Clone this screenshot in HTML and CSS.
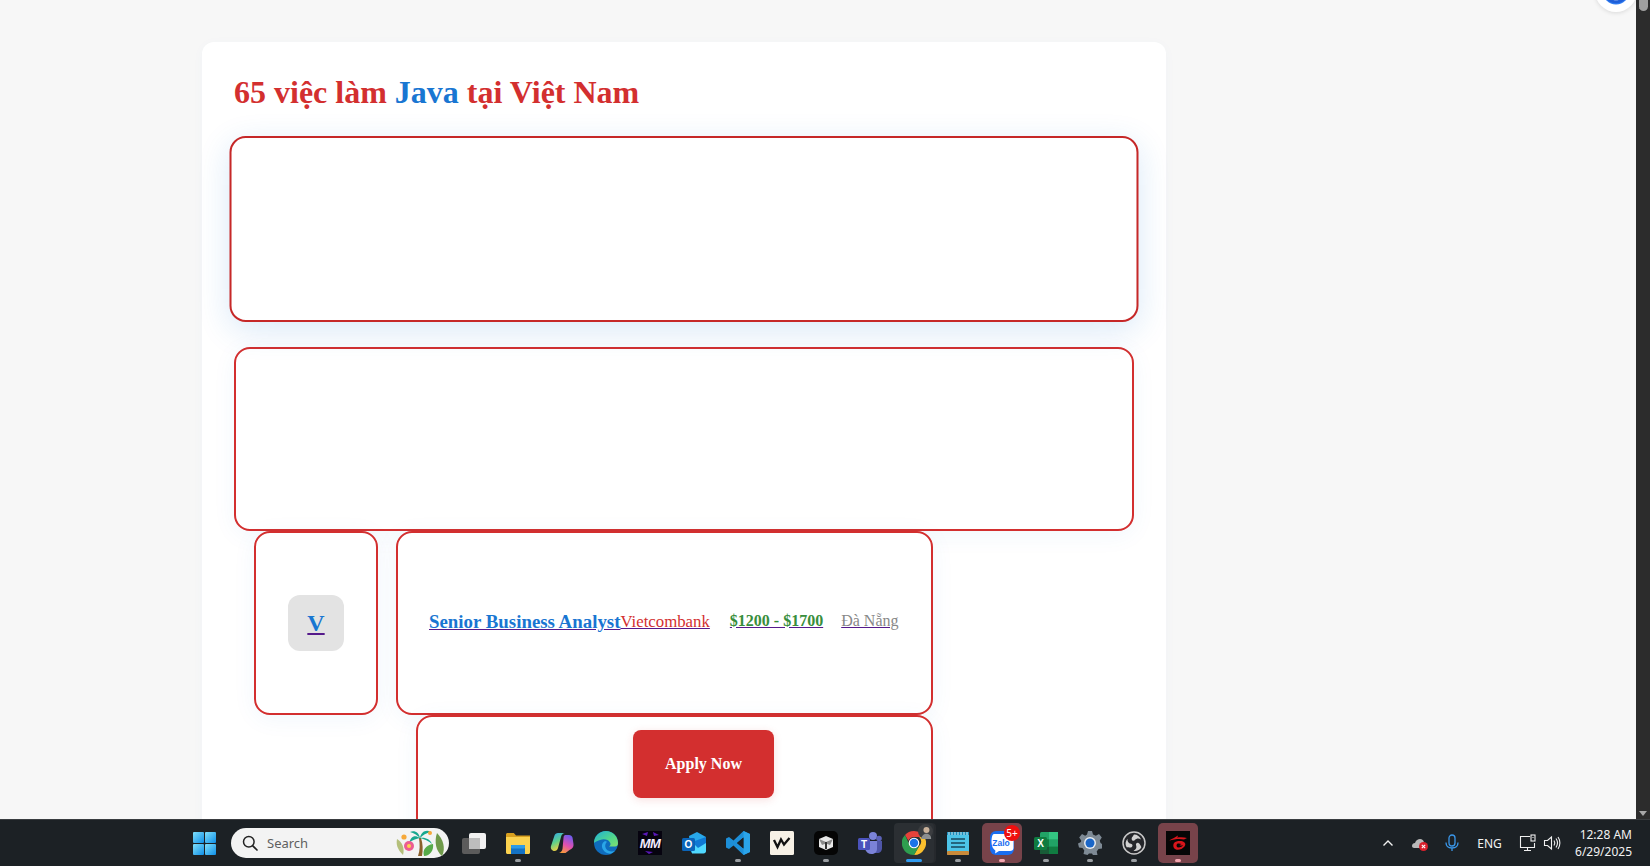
FILE: index.html
```html
<!DOCTYPE html>
<html lang="vi">
<head>
<meta charset="utf-8">
<title>65 việc làm Java tại Việt Nam</title>
<link rel="stylesheet" href="styles.css">
</head>
<body>
<div class="screen">
  <div class="viewport">
    <main class="page">
      <section class="panel">
        <h1 class="heading">65 việc làm <span class="heading-accent">Java</span> tại Việt Nam</h1>
        <div class="card card-hover"></div>
        <div class="card card-second"></div>
        <div class="job-grid">
          <div class="cell cell-logo">
            <a class="logo-box" href="#">V</a>
          </div>
          <div class="cell cell-info">
            <a class="job-title" href="#">Senior Business Analyst</a>
            <a class="job-company" href="#">Vietcombank</a>
            <a class="job-salary" href="#">$1200 - $1700</a>
            <a class="job-location" href="#">Đà Nẵng</a>
          </div>
          <div class="cell cell-action">
            <a class="apply" href="#">Apply Now</a>
          </div>
        </div>
      </section>
    </main>
    <div class="float-badge">
      <svg class="float-icon" viewBox="0 0 24 24"><circle cx="12" cy="12" r="11.500" fill="#2f7bf0"/><path d="M1 12c3 7 18 8 22 0-2 14-20 14-22 0z" fill="#1f5fd8"/><path d="M4 15c4 4.500 12 4.500 16 0-3 2-13 2-16 0z" fill="#fff"/><path d="M7 18.500c3 2 7 2 10 0-3 1-7 1-10 0z" fill="#fff"/></svg>
    </div>
    <div class="scrollbar">
      <svg class="sb-arrow" viewBox="0 0 10 10"><path d="M1 2h8L5 7z" fill="#9a9a9a" transform="rotate(180 5 5)"/></svg>
      <div class="sb-thumb"></div>
      <svg class="sb-arrow" viewBox="0 0 10 10"><path d="M1 3h8L5 8z" fill="#a8a8a8"/></svg>
    </div>
  </div>

  <footer class="taskbar">
    <div class="tb-item">
      <svg class="ic-start" viewBox="0 0 23 23">
        <defs><linearGradient id="win" x1="0" y1="0" x2="1" y2="1"><stop offset="0" stop-color="#7fe0fb"/><stop offset="1" stop-color="#0f8fe8"/></linearGradient></defs>
        <rect width="11" height="11" rx="1" fill="url(#win)"/><rect x="12" width="11" height="11" rx="1" fill="url(#win)"/><rect y="12" width="11" height="11" rx="1" fill="url(#win)"/><rect x="12" y="12" width="11" height="11" rx="1" fill="url(#win)"/>
      </svg>
    </div>
    <div class="search">
      <svg class="search-icon" viewBox="0 0 16 16"><circle cx="6.800" cy="6.800" r="5.300" fill="none" stroke="#222" stroke-width="1.500"/><path d="M10.800 10.800L15 15" stroke="#222" stroke-width="1.700" stroke-linecap="round"/></svg>
      <span class="search-label">Search</span>
      <svg class="search-art" viewBox="0 0 50 30">
        <path d="M7 27C1 21 0 16 1 11c5 3 8 9 6 16z" fill="#b4bf7a"/>
        <path d="M46 28c-6-5-8-14-5-23 6 6 9 15 5 23z" fill="#6f9a4a"/>
        <path d="M23 10c1 7 1 12-1 18h4c1-6 1-12-1-18z" fill="#8a5f2a"/>
        <path d="M24 10C18 6 15 9 13 15c3-3 7-4 11-5zM24 10c-1-5-5-8-10-6 4 1 7 3 10 6zM24 10c1-6 6-9 11-6-5 1-8 3-11 6zM24 10c5-1 10 1 12 6-3-3-8-5-12-6z" fill="#17a88f"/>
        <circle cx="13" cy="18" r="5" fill="#ec5d92"/><circle cx="13" cy="18" r="2" fill="#ffd24d"/>
        <path d="M28 28c-2-6 2-11 9-12 1 6-3 12-9 12z" fill="#57ab4a"/>
        <circle cx="8" cy="9" r="2.600" fill="#f6a83a"/><circle cx="34" cy="5" r="2" fill="#f6a83a"/>
      </svg>
    </div>
    <div class="tb-item">
      <svg class="ic" viewBox="0 0 24 24"><rect x="7" y="2" width="17" height="16" rx="2" fill="#f2f2f2"/><rect x="0" y="7" width="18" height="16" rx="2" fill="#5b5b5b"/><rect x="7" y="7" width="11" height="11" fill="#bdbdbd"/></svg>
    </div>
    <div class="tb-item tb-run">
      <svg class="ic" viewBox="0 0 24 24"><path d="M0 3.500C0 2.700.7 2 1.500 2h6.300L10 4.500h14V8H0z" fill="#d8a01f"/><path d="M0 6h24v15.500c0 .8-.7 1.500-1.500 1.500h-21C.7 23 0 22.300 0 21.500z" fill="#fbd24f"/><path d="M5 15c0-.6.4-1 1-1h12c.6 0 1 .4 1 1v8H5z" fill="#1472c4"/><rect x="5" y="14" width="14" height="3.500" rx="1" fill="#2d9be8"/></svg>
    </div>
    <div class="tb-item">
      <svg class="ic" viewBox="0 0 24 24">
        <defs>
          <linearGradient id="cp1" x1="0" y1="0" x2="0.4" y2="1"><stop offset="0" stop-color="#2ea8f0"/><stop offset=".55" stop-color="#5fd08a"/><stop offset="1" stop-color="#f4d03f"/></linearGradient>
          <linearGradient id="cp2" x1="0.7" y1="0" x2="0.3" y2="1"><stop offset="0" stop-color="#6b5cf0"/><stop offset=".55" stop-color="#e04fb0"/><stop offset="1" stop-color="#f89a3c"/></linearGradient>
        </defs>
        <path d="M8 2h6.500c-2 .5-3 2-3.500 4l-3 11c-.5 1.800-1.800 3-3.500 3C2 20 .2 17.500 1 15L4.500 4.500C5 3 6.300 2 8 2z" fill="url(#cp1)"/>
        <path d="M15 4h4c1.700 0 3 1 3.500 2.500l1 6.500c.5 3-1.500 5-4 6l-4 3H9c2 -.5 3-2 3.500-4l1-11C13.700 5.200 14 4.500 15 4z" fill="url(#cp2)"/>
      </svg>
    </div>
    <div class="tb-item">
      <svg class="ic" viewBox="0 0 24 24">
        <defs><linearGradient id="edge" x1="0" y1="0" x2="1" y2="1"><stop offset="0" stop-color="#1fb0d8"/><stop offset=".6" stop-color="#52d88a"/><stop offset="1" stop-color="#82e070"/></linearGradient></defs>
        <circle cx="12" cy="12" r="12" fill="#0f6cbd"/>
        <path d="M0 12C0 5.400 5.400 0 12 0s12 5.400 12 12c0 2-1 3.500-3 3.500h-6c1.500-1 2-2.500 1-4-1.500-3-6-4-10-2.500C3 10 1 11 0 12z" fill="url(#edge)"/>
        <path d="M11 10c-3 1.500-4 5-2 8.500 1.500 2.500 4 4 7 4.200 2-.5 3.500-1.500 5-3-3.500 1.500-7 .5-8.500-1.500-1.500-2-2-5 .5-7.500z" fill="#2aa6e8"/>
      </svg>
    </div>
    <div class="tb-item">
      <div class="ic mm">
        <svg class="mm-art" viewBox="0 0 24 24"><path d="M4 3l6-2-1 4zM15 1l6 3-5 1zM7 20l8 1-4 2z" fill="#5a18b8"/></svg>
        <span class="mm-text">MM</span>
      </div>
    </div>
    <div class="tb-item">
      <svg class="ic" viewBox="0 0 24 24"><path d="M7 5l8-4 9 5v13c0 1.500-1 2.500-2.500 2.500H9z" fill="#28a8ea"/><path d="M10 11h14v9c0 1.500-1 2.500-2.500 2.500H10z" fill="#50d9ff"/><path d="M10 11l14-5v6l-8 5z" fill="#0f78d4"/><rect x="0" y="7" width="13" height="13" rx="1.500" fill="#0a64b8"/><text class="ol-o" x="6.500" y="17.300">O</text></svg>
    </div>
    <div class="tb-item tb-run">
      <svg class="ic" viewBox="0 0 24 24"><path d="M17.500 0L24 3v18l-6.500 3-10-9.500L3 18l-3-1.500v-9L3 6l4.500 3.500zM17.500 6.500L11 12l6.500 5.500z" fill="#1d8fd8"/><path d="M17.500 0L24 3v18l-6.500 3z" fill="#2aa4ea"/><path d="M17.500 6.500v11L11 12z" fill="#1c2024"/></svg>
    </div>
    <div class="tb-item">
      <svg class="ic" viewBox="0 0 24 24"><rect width="24" height="24" rx="1.500" fill="#f7f1e6"/><path d="M4 9l3.500 7L11 8.500l3 5 5.500-6.500" fill="none" stroke="#111" stroke-width="2.300"/></svg>
    </div>
    <div class="tb-item tb-run">
      <svg class="ic" viewBox="0 0 24 24"><rect width="24" height="24" rx="5" fill="#050505"/><path d="M12 5l7 3v8l-7 3-7-3V8z" fill="#e8e8e8"/><path d="M5 8l7 3 7-3-3 6-4-1.500L8 14z" fill="#8a8a8a"/><path d="M11 11h2v7h-2z" fill="#333"/></svg>
    </div>
    <div class="tb-item">
      <svg class="ic" viewBox="0 0 24 24"><circle cx="15" cy="5" r="4" fill="#7b83d8"/><circle cx="21" cy="7.500" r="2.800" fill="#5b62b8"/><path d="M17 10h7v7c0 3-2 5-4.500 5H17z" fill="#4f56a8"/><path d="M5 10h14v8c0 3-2.500 5-5.500 5S8 21 7 18z" fill="#7b83d8"/><rect x="0" y="7" width="12" height="12" rx="1.500" fill="#4b53bc"/><text class="teams-t" x="6" y="16.500">T</text></svg>
    </div>
    <div class="tb-item tb-active">
      <svg class="ic" viewBox="0 0 24 24">
        <path d="M12 0a12 12 0 0 1 10.400 6H12a6 6 0 0 0-5.600 3.800L3 3.900A12 12 0 0 1 12 0z" fill="#e5423a"/>
        <path d="M22.400 6A12 12 0 0 1 12 24l5.200-9a6 6 0 0 0 0-9z" fill="#fbc02d"/>
        <path d="M3 3.900l5.200 11.300A6 6 0 0 0 17.200 15L12 24A12 12 0 0 1 3 3.900z" fill="#2e9e4f"/>
        <circle cx="12" cy="12" r="5.300" fill="#fff"/><circle cx="12" cy="12" r="4.200" fill="#1a73e8"/>
      </svg>
      <svg class="avatar" viewBox="0 0 16 16"><circle cx="8" cy="8" r="8" fill="#3b3d40"/><circle cx="9" cy="6.500" r="3.200" fill="#c9b19a"/><path d="M3.500 16c.5-4 3-5.500 5.500-5.500S14 12 14 16z" fill="#8b8e90"/></svg>
    </div>
    <div class="tb-item tb-run">
      <svg class="ic" viewBox="0 0 24 24"><rect x="1" y="1" width="22" height="23" rx="1.500" fill="#4cc4e8"/><rect x="1" y="20" width="22" height="4" rx="1" fill="#c98a3a"/><path d="M1 1h22v3H1z" fill="#1a8cb8"/><path d="M3 1v3M6 1v3M9 1v3M12 1v3M15 1v3M18 1v3M21 1v3" stroke="#d8f0f8" stroke-width="1"/><path d="M5 8h14M5 12h14M5 16h14" stroke="#17475c" stroke-width="1.600"/></svg>
    </div>
    <div class="tb-item tb-flag tb-run">
      <svg class="ic" viewBox="0 0 24 24"><rect width="24" height="24" rx="6" fill="#1a6ef0"/><path d="M4 3h16c2 0 3.500 1.500 3.500 3.500V17c0 2-1.500 3-3.500 3H9l-4 2.500c.3-1 .5-2 .3-3C3 18 1.500 15 1.500 11c0-4 .7-8 2.500-8z" fill="#fff"/><text class="zalo-t" x="11" y="15">Zalo</text></svg>
      <span class="notif">5+</span>
    </div>
    <div class="tb-item tb-run">
      <svg class="ic" viewBox="0 0 24 24"><rect x="6" y="1" width="18" height="22" rx="1.500" fill="#21a366"/><rect x="15" y="1" width="9" height="7.300" fill="#33c481"/><rect x="6" y="8.300" width="9" height="7.300" fill="#107c41"/><rect x="15" y="15.600" width="9" height="7.400" fill="#107c41"/><rect x="6" y="15.600" width="9" height="7.400" fill="#185c37"/><rect x="0" y="6" width="13" height="13" rx="1.500" fill="#0f7b3f"/><text class="xl-x" x="6.500" y="16.300">X</text></svg>
    </div>
    <div class="tb-item tb-run">
      <svg class="ic" viewBox="0 0 24 24"><path d="M10 0h4l1 3.500 2.800 1.200L21 3l2.800 3.500-2 3 .7 2.500 2.500 1.500-1 4-3.500.5-1.800 2.500.8 3.500-4 1-1.500-2.500h-3L9.500 24l-4-1 .8-3.500-1.800-2.500-3.500-.5-1-4L3 11l.2-1.500-2-3L4 3l3.200 1.700L9 3.500z" fill="#7e8a95"/><circle cx="12" cy="12" r="6" fill="#e8edf2"/><circle cx="12" cy="12" r="4.500" fill="#1a66c8"/></svg>
    </div>
    <div class="tb-item tb-run">
      <svg class="ic" viewBox="0 0 24 24"><circle cx="12" cy="12" r="11" fill="#24262a" stroke="#c8c8c8" stroke-width="1.500"/><g fill="#d2d2d2"><path d="M12 3.500c3.500 0 6 2 7 5-2-1.500-4.500-1.500-6 .5-1 1.300-3 .8-3.300-.8-.2-1.200.5-2.200 1-2.700.5-.8.800-1.500 1.300-2z"/><path d="M12 3.500c3.500 0 6 2 7 5-2-1.500-4.500-1.500-6 .5-1 1.300-3 .8-3.300-.8-.2-1.200.5-2.200 1-2.700.5-.8.800-1.500 1.300-2z" transform="rotate(120 12 12)"/><path d="M12 3.500c3.500 0 6 2 7 5-2-1.500-4.500-1.500-6 .5-1 1.300-3 .8-3.300-.8-.2-1.200.5-2.200 1-2.700.5-.8.800-1.500 1.300-2z" transform="rotate(240 12 12)"/></g></svg>
    </div>
    <div class="tb-item tb-flag tb-run">
      <svg class="ic" viewBox="0 0 24 24"><rect width="24" height="24" fill="#060606"/><path d="M3 9.500C7 7 10 6 12 4.500c0 .8-.3 1.300-1 2 3-.5 7-.5 10 .5l-3 1.500c-4-1-9-.5-15 1z" fill="#d8151b"/><path d="M8 12c2-2 6-2.500 9-1.500 2.500 1 3 3 1.500 5-2 2.500-6 4-8.500 3-2.500-1-3.500-4-2-6.500zm3 1c-1 1.500-.5 3.500 1.500 3.500 2 0 4-1 4.500-2.500-1.500.8-3 .8-3.500 0 .8-.2 1.500-.5 2-1-1.500-.5-3.500-.8-4.500 0z" fill="#d8151b"/></svg>
    </div>

    <div class="tray">
      <span class="tray-item"><svg class="tray-ic-s" viewBox="0 0 12 12"><path d="M1.500 8.500L6 4l4.500 4.500" fill="none" stroke="#f2f2f2" stroke-width="1.400"/></svg></span>
      <span class="tray-item"><svg class="tray-ic" viewBox="0 0 18 18"><path d="M1 12c0-2 1.500-3 3-3 1-3 3-4 5-4s4 1.500 4 4v5H3c-1 0-2-1-2-2z" fill="#b9b9b9"/><circle cx="12.500" cy="12.500" r="4.500" fill="#d9202c"/><path d="M10.800 10.800l3.400 3.400M14.200 10.800l-3.400 3.400" stroke="#fff" stroke-width="1.100"/></svg></span>
      <span class="tray-item"><svg class="tray-ic" viewBox="0 0 18 18"><rect x="6" y="1" width="6" height="11" rx="3" fill="none" stroke="#3a96e8" stroke-width="1.300"/><path d="M3 8.500c0 3.500 2.500 5.500 6 5.500s6-2 6-5.500M9 14v3" fill="none" stroke="#3a96e8" stroke-width="1.300"/></svg></span>
      <span class="tray-item tray-lang">ENG</span>
      <span class="tray-item tray-net"><svg class="tray-ic" viewBox="0 0 18 18"><path d="M11 2.500H1.500v11h14V9M5 16.500h7M8.500 13.500v3" fill="none" stroke="#f0f0f0" stroke-width="1.100"/><rect x="12" y="1" width="4" height="6" fill="none" stroke="#f0f0f0" stroke-width="1.100"/><path d="M14 3v1" stroke="#f0f0f0"/></svg></span>
      <span class="tray-item tray-vol"><svg class="tray-ic" viewBox="0 0 18 18"><path d="M1.500 6.500h3l4-3.500v12l-4-3.500h-3z" fill="none" stroke="#f0f0f0" stroke-width="1.100"/><path d="M11 6.500c1 1.500 1 3.500 0 5M13 4.500c2 3 2 6 0 9M15 3c2.500 3.500 2.500 8.500 0 12" fill="none" stroke="#f0f0f0" stroke-width="1.100"/></svg></span>
      <div class="clock"><span>12:28 AM</span><span>6/29/2025</span></div>
    </div>
  </footer>
</div>
</body>
</html>
```

FILE: styles.css
```css
* { box-sizing: border-box; }

html, body {
  margin: 0;
  height: 100%;
  overflow: hidden;
}

.screen {
  display: flex;
  flex-direction: column;
  width: 1650px;
  height: 866px;
  background: #f7f7f7;
  font-family: "Liberation Serif", "Times New Roman", serif;
}

/* page area */
.viewport {
  position: relative;
  display: flex;
  flex: 1;
  min-height: 0;
}

.page {
  flex: 1;
  min-width: 0;
  overflow: hidden;
  padding: 42px 0 0 202px;
}

.panel {
  width: 964px;
  min-height: 900px;
  padding: 32px 32px 0;
  background: #fff;
  border-radius: 12px;
  box-shadow: 0 2px 12px rgba(25, 118, 210, 0.03);
}

.heading {
  margin: 0 0 26px;
  font-size: 32px;
  line-height: 37px;
  font-weight: 700;
  color: #d32f2f;
}

.heading-accent { color: #1976d2; }

.card {
  height: 184px;
  background: #fff;
  border: 2px solid #d32f2f;
  border-radius: 16px;
  box-shadow: 0 4px 24px rgba(25, 118, 210, 0.06);
}

.card-hover {
  border-color: #c62828;
  transform: scale(1.01);
  box-shadow: 0 8px 32px rgba(25, 118, 210, 0.16);
  margin-bottom: 26px;
}

.job-grid {
  display: grid;
  grid-template-columns: 124px 537px;
  grid-auto-rows: 184px;
  column-gap: 18px;
  padding-left: 20px;
}

.cell {
  display: flex;
  align-items: center;
  background: #fff;
  border: 2px solid #d32f2f;
  border-radius: 16px;
  box-shadow: 0 4px 24px rgba(25, 118, 210, 0.06);
}

.cell-logo { justify-content: center; }

.logo-box {
  display: flex;
  align-items: center;
  justify-content: center;
  width: 56px;
  height: 56px;
  border-radius: 12px;
  background: #e3e3e3;
  color: #1976d2;
  font-size: 24px;
  font-weight: 700;
  text-decoration-color: #551a8b;
}

.cell-info {
  padding-left: 31px;
  padding-bottom: 2px;
}

.job-title, .job-company, .job-salary, .job-location {
  text-decoration-color: #551a8b;
}

.job-title {
  font-size: 18.880px;
  font-weight: 700;
  color: #1976d2;
}

.job-company {
  margin-bottom: 1px;
  font-size: 16.800px;
  color: #d32f2f;
}

.job-salary {
  margin-left: 20px;
  margin-bottom: 3px;
  font-size: 16px;
  font-weight: 700;
  color: #388e3c;
}

.job-location {
  margin-left: 18px;
  margin-bottom: 3px;
  font-size: 16px;
  color: #888;
}

.cell-action {
  grid-column: 2;
  margin-left: 20px;
  align-items: flex-start;
  padding: 13px 0 0 215px;
}

.apply {
  display: flex;
  align-items: center;
  justify-content: center;
  width: 141px;
  height: 68px;
  border-radius: 8px;
  background: #d32f2f;
  color: #fff;
  font-size: 16px;
  font-weight: 700;
  text-decoration: none;
  box-shadow: 0 2px 8px rgba(211, 47, 47, 0.15);
}

/* floating widget, over the page corner */
.float-badge {
  position: absolute;
  top: -30px;
  right: 13px;
  display: flex;
  align-items: center;
  justify-content: center;
  width: 42px;
  height: 42px;
  border-radius: 50%;
  background: #fff;
  box-shadow: 0 1px 4px rgba(0, 0, 0, 0.12);
}

.float-icon { width: 28px; height: 28px; }

/* scrollbar */
.scrollbar {
  display: flex;
  flex-direction: column;
  align-items: center;
  justify-content: space-between;
  position: relative;
  flex: 0 0 14px;
  background: #2c2c2c;
}

.sb-thumb {
  position: absolute;
  top: 0;
  left: 3px;
  width: 9px;
  height: 11px;
  border-radius: 0 0 5px 5px;
  background: #9f9f9f;
}

.sb-arrow { width: 10px; height: 12px; }

/* taskbar */
.taskbar {
  display: flex;
  align-items: center;
  flex: 0 0 47px;
  padding-left: 184px;
  gap: 4px;
  background: #1c2125;
  border-top: 1px solid #3a3d40;
}

.tb-item {
  position: relative;
  display: flex;
  align-items: center;
  justify-content: center;
  width: 40px;
  height: 40px;
  border-radius: 4px;
  flex: none;
}

.tb-run::after {
  content: "";
  position: absolute;
  left: 17px;
  bottom: 1px;
  width: 6px;
  height: 3px;
  border-radius: 2px;
  background: #9b9fa3;
}

.tb-active {
  background: #2b2f33;
  box-shadow: 2px 0 0 #26292d;
}

.tb-active::after {
  content: "";
  position: absolute;
  left: 12px;
  bottom: 1px;
  width: 16px;
  height: 3px;
  border-radius: 2px;
  background: #2f9bf0;
}

.tb-flag { background: #77434a; border-radius: 5px; }
.tb-flag::after { background: #f3a6b0; }

.ic { width: 24px; height: 24px; display: block; }
.ic-start { width: 23px; height: 23px; display: block; }

.avatar {
  position: absolute;
  top: 1px;
  right: 1px;
  width: 15px;
  height: 15px;
}

.search {
  display: flex;
  align-items: center;
  flex: none;
  width: 218px;
  height: 30px;
  margin: 0 1px 0 3px;
  padding-left: 11px;
  border-radius: 15px;
  background: #f3f3f3;
}

.search-icon { width: 16px; height: 16px; flex: none; }

.search-label {
  margin-left: 9px;
  flex: 1;
  font-family: "Noto Sans", "Open Sans", sans-serif;
  font-size: 13px;
  color: #5f5f5f;
}

.search-art { width: 50px; height: 30px; margin-right: 3px; flex: none; }

.mm {
  position: relative;
  display: flex;
  align-items: center;
  justify-content: center;
  background: #06030f;
  overflow: hidden;
}

.mm-art { position: absolute; inset: 0; width: 24px; height: 24px; }

.mm-text {
  position: relative;
  font-family: "Liberation Sans", Arial, sans-serif;
  font-style: italic;
  font-weight: 700;
  font-size: 13px;
  letter-spacing: -0.5px;
  color: #f4ecff;
}

.ol-o, .teams-t, .xl-x {
  fill: #fff;
  font-family: "Liberation Sans", Arial, sans-serif;
  font-weight: 700;
  font-size: 10px;
  text-anchor: middle;
}

.zalo-t {
  fill: #1a6ef0;
  font-family: "Liberation Sans", Arial, sans-serif;
  font-weight: 700;
  font-size: 8.500px;
  text-anchor: middle;
}

.notif {
  position: absolute;
  top: 2px;
  right: 2px;
  display: flex;
  align-items: center;
  justify-content: center;
  width: 16px;
  height: 16px;
  border-radius: 50%;
  background: #ef0f0f;
  color: #fff;
  font-family: "Noto Sans", sans-serif;
  font-size: 10px;
  line-height: 1;
}

.tray {
  display: flex;
  align-items: center;
  margin-left: auto;
  padding-right: 18px;
  color: #f2f2f2;
  font-family: "Noto Sans", "Open Sans", sans-serif;
}

.tray-item {
  display: flex;
  align-items: center;
  justify-content: center;
  width: 32px;
  height: 30px;
}

.tray-lang { width: 43px; font-size: 12px; }
.tray-net { width: 28px; margin-left: 3px; }
.tray-vol { width: 20px; margin-right: 4px; }

.tray-ic { width: 18px; height: 18px; }
.tray-ic-s { width: 12px; height: 12px; }

.clock {
  display: flex;
  flex-direction: column;
  align-items: flex-end;
  width: 66px;
  font-size: 12px;
  line-height: 17px;
}
```
